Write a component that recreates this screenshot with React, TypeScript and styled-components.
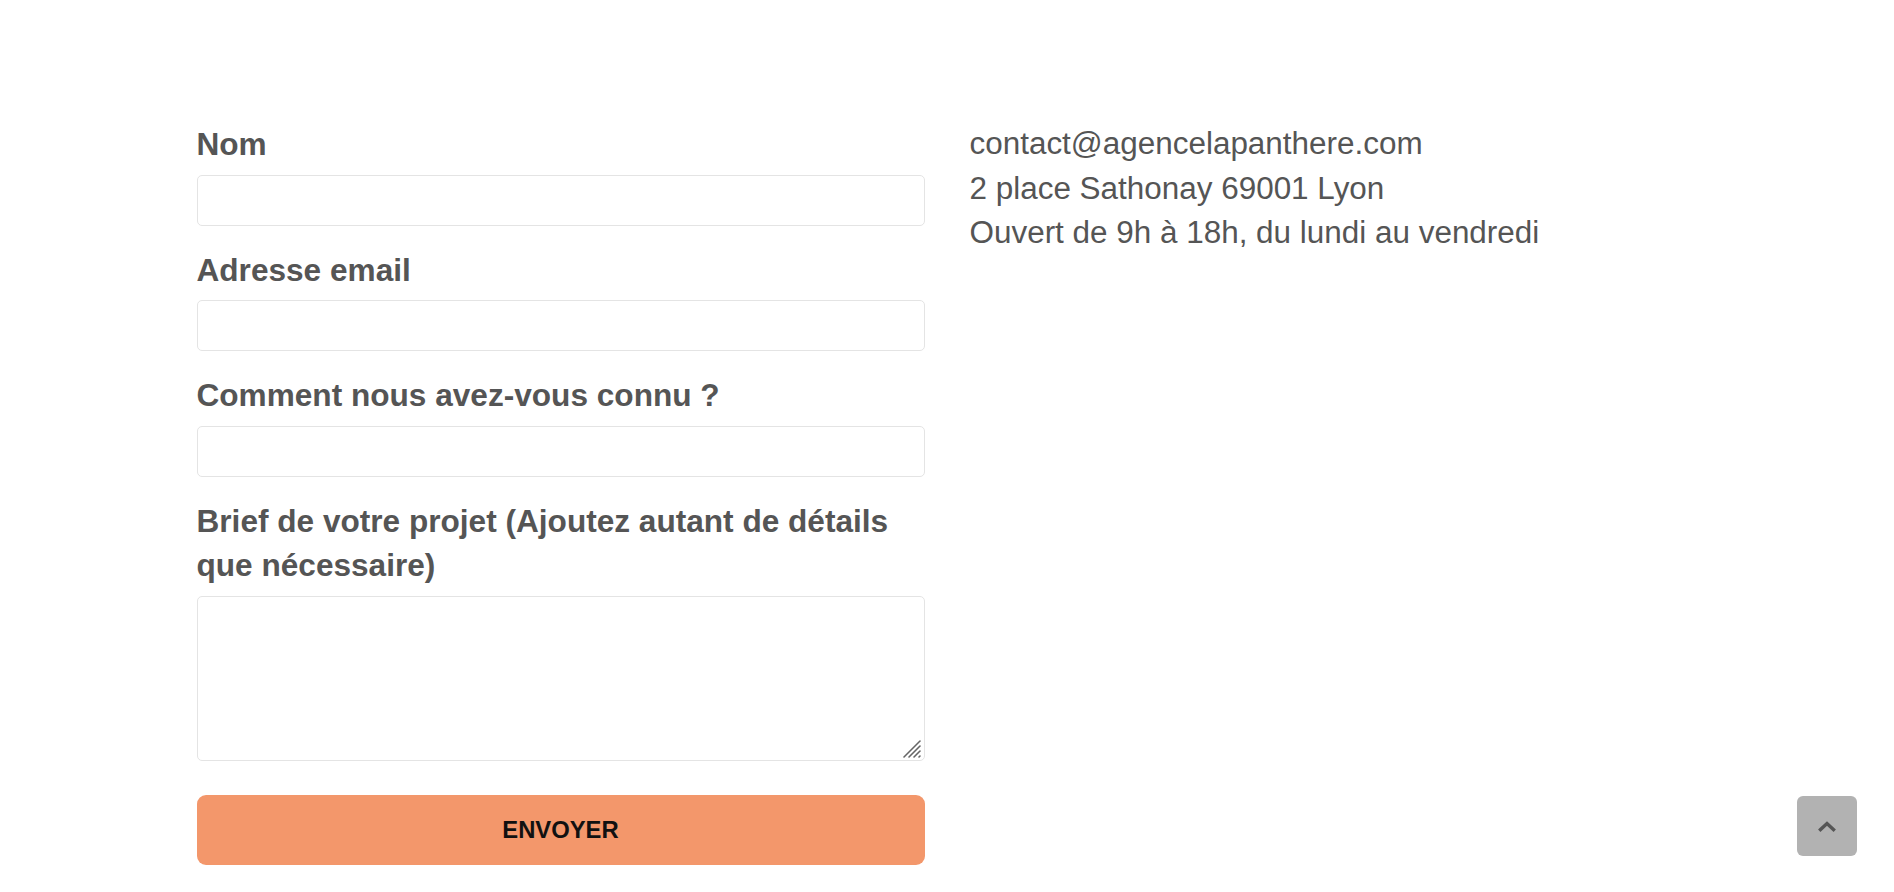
import React from "react";
import styled, { createGlobalStyle } from "styled-components";

const Global = createGlobalStyle`
  html, body { margin: 0; padding: 0; background: #ffffff; }
  body { font-family: "Liberation Sans", Arial, sans-serif; color: #555555; }
  * { box-sizing: border-box; }
`;

const Page = styled.main`
  width: 1501px;
  margin: 0 auto;
  padding-top: 122px;
  display: grid;
  grid-template-columns: 728px 728px;
  column-gap: 45px;
  align-items: start;
`;

const Form = styled.form`
  display: flex;
  flex-direction: column;
`;

const Field = styled.div<{ $space?: number }>`
  display: flex;
  flex-direction: column;
  margin-bottom: ${(p) => p.$space ?? 22}px;
`;

const Label = styled.label`
  font-family: "Liberation Sans", Arial, sans-serif;
  font-weight: 700;
  font-size: 31.6px;
  line-height: 44.5px;
  color: #555555;
  margin-bottom: 8px;
`;

const Input = styled.input`
  height: 51px;
  width: 100%;
  border: 1px solid #e4e4e4;
  border-radius: 5px;
  background: #ffffff;
  font-family: "Liberation Sans", Arial, sans-serif;
  font-size: 20px;
  padding: 0 12px;
  outline: none;
`;

const AreaWrap = styled.div`
  position: relative;
  width: 100%;
`;

const TextArea = styled.textarea`
  height: 165px;
  width: 100%;
  border: 1px solid #e4e4e4;
  border-radius: 5px;
  background: #ffffff;
  font-family: "Liberation Sans", Arial, sans-serif;
  font-size: 20px;
  padding: 12px;
  outline: none;
  resize: vertical;
  display: block;
  &::-webkit-resizer {
    background: transparent;
  }
`;

const Grip = styled.svg`
  position: absolute;
  right: 2px;
  bottom: 2px;
  pointer-events: none;
`;

const Submit = styled.button`
  height: 70px;
  width: 100%;
  border: none;
  border-radius: 9px;
  background: #f3976b;
  color: #111111;
  font-family: "Liberation Sans", Arial, sans-serif;
  font-weight: 700;
  font-size: 23.8px;
  cursor: pointer;
`;

const Info = styled.div`
  font-family: "Liberation Sans", Arial, sans-serif;
  font-size: 31.45px;
  line-height: 44.5px;
  color: #555555;
`;

const InfoLine = styled.p`
  margin: 0;
`;

const ScrollTop = styled.button`
  position: fixed;
  right: 37px;
  bottom: 36px;
  width: 60px;
  height: 60px;
  border: none;
  border-radius: 6px;
  background: #b2b2b2;
  display: flex;
  align-items: center;
  justify-content: center;
  padding: 0;
  cursor: pointer;
`;

export default function App() {
  return (
    <>
      <Global />
      <Page>
        <Form onSubmit={(e) => e.preventDefault()}>
          <Field>
            <Label htmlFor="nom">Nom</Label>
            <Input id="nom" type="text" />
          </Field>
          <Field>
            <Label htmlFor="email">Adresse email</Label>
            <Input id="email" type="email" />
          </Field>
          <Field>
            <Label htmlFor="connu">Comment nous avez-vous connu ?</Label>
            <Input id="connu" type="text" />
          </Field>
          <Field $space={34}>
            <Label htmlFor="brief">
              Brief de votre projet (Ajoutez autant de détails que nécessaire)
            </Label>
            <AreaWrap>
              <TextArea id="brief" />
              <Grip width="22" height="22" viewBox="0 0 22 22" fill="none">
                <g stroke="#666666" strokeWidth="1.6" strokeLinecap="round">
                  <line x1="3" y1="20" x2="19" y2="4" />
                  <line x1="8" y1="20" x2="19" y2="9" />
                  <line x1="13" y1="20" x2="19" y2="14" />
                  <line x1="18" y1="20" x2="19" y2="19" />
                </g>
              </Grip>
            </AreaWrap>
          </Field>
          <Submit type="submit">ENVOYER</Submit>
        </Form>
        <Info>
          <InfoLine>contact@agencelapanthere.com</InfoLine>
          <InfoLine>2 place Sathonay 69001 Lyon</InfoLine>
          <InfoLine>Ouvert de 9h à 18h, du lundi au vendredi</InfoLine>
        </Info>
      </Page>
      <ScrollTop aria-label="Haut de page">
        <svg width="20" height="14" viewBox="0 0 20 14" fill="none">
          <path d="M3.5 10.5 L10 4.5 L16.5 10.5" stroke="#555555" strokeWidth="3.4" strokeLinecap="square" />
        </svg>
      </ScrollTop>
    </>
  );
}
